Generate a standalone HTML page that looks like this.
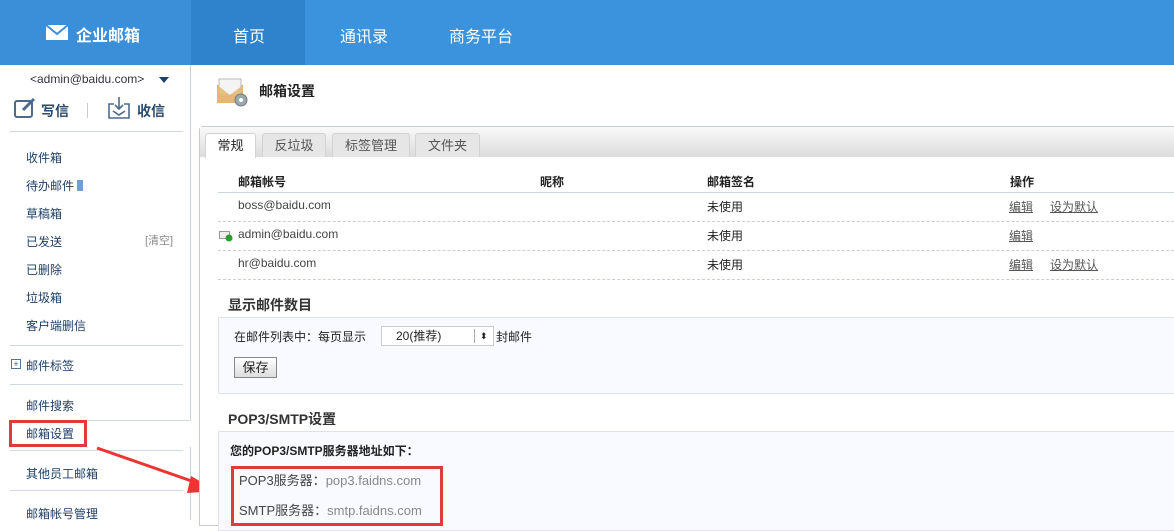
<!DOCTYPE html><html><head><meta charset="utf-8"><style>
*{margin:0;padding:0;box-sizing:border-box}
body{width:1174px;height:520px;overflow:hidden;background:#fff;font-family:"Liberation Sans","Noto Sans CJK SC",sans-serif;font-size:12px;color:#333;position:relative}
.a{position:absolute;white-space:nowrap}
.hdr{left:0;top:0;width:1174px;height:65px;background:#3a93dc}
.nav{color:#fff;font-size:16px;top:23px}
.side a{position:absolute;left:26px;color:#1f3f66;font-size:12px}
.sep{position:absolute;left:10px;width:173px;height:1px;background:#cfd8e3}
.th{font-weight:bold;color:#222;top:173px}
.dash{position:absolute;left:218px;width:956px;border-top:1px dashed #c9d0d8}
.u{text-decoration:underline;color:#555}
.tab{position:absolute;top:133px;height:24px;background:#e6e6e6;border:1px solid #d3d3d3;border-bottom:none;color:#555;font-size:13px;text-align:center;line-height:23px;border-radius:3px 3px 0 0}
</style></head><body>
<div class="a hdr"></div>
<div class="a" style="left:0;top:0;width:191px;height:65px;background:#3b8fd8"></div>
<div class="a" style="left:191px;top:0;width:114px;height:65px;background:#2f82cc"></div>
<svg class="a" style="left:46px;top:25px" width="22" height="15"><rect width="22" height="15" fill="#fff"/><path d="M0 0 L11 9 L22 0" stroke="#3b8fd8" stroke-width="2" fill="none"/></svg>
<div class="a" style="left:76px;top:22px;color:#fff;font-size:16px;font-weight:bold">企业邮箱</div>
<div class="a nav" style="left:233px">首页</div>
<div class="a nav" style="left:340px">通讯录</div>
<div class="a nav" style="left:449px">商务平台</div>
<!-- sidebar -->
<div class="a" style="left:190px;top:65px;width:1px;height:355px;background:#c8d0da"></div>
<div class="a" style="left:190px;top:447px;width:1px;height:73px;background:#c8d0da"></div>
<div class="a" style="left:30px;top:72px;color:#334;font-size:12px">&lt;admin@baidu.com&gt;</div>
<svg class="a" style="left:159px;top:77px" width="10" height="6"><path d="M0 0H10L5 6Z" fill="#1f3f66"/></svg>
<svg class="a" style="left:14px;top:97px" width="24" height="22"><rect x="1" y="4" width="17" height="16" rx="2" fill="none" stroke="#4c6a8a" stroke-width="2"/><path d="M9 13 L20 2" stroke="#4c6a8a" stroke-width="3"/></svg>
<div class="a" style="left:41px;top:101px;font-size:14px;font-weight:bold;color:#2b4a6b">写信</div>
<div class="a" style="left:87px;top:103px;width:1px;height:15px;background:#ccc"></div>
<svg class="a" style="left:107px;top:96px" width="24" height="24"><path d="M7 8H2V22H22V8H17" fill="none" stroke="#4c6a8a" stroke-width="1.6"/><path d="M12 1V13M8 9L12 13L16 9M6 15L12 19L18 15" fill="none" stroke="#4c6a8a" stroke-width="1.6"/></svg>
<div class="a" style="left:137px;top:101px;font-size:14px;font-weight:bold;color:#2b4a6b">收信</div>
<div class="sep" style="top:131px"></div>
<div class="side">
<a style="top:149px">收件箱</a>
<a style="top:177px">待办邮件 <span style="display:inline-block;width:6px;height:11px;background:#6f9fd6;vertical-align:-1px"></span></a>
<a style="top:205px">草稿箱</a>
<a style="top:233px">已发送</a>
<a style="top:261px">已删除</a>
<a style="top:289px">垃圾箱</a>
<a style="top:317px">客户端删信</a>
<a style="top:357px">邮件标签</a>
<a style="top:397px">邮件搜索</a>
<a style="top:425px">邮箱设置</a>
<a style="top:465px">其他员工邮箱</a>
<a style="top:505px">邮箱帐号管理</a>
</div>
<div class="a" style="left:145px;top:232px;color:#888;font-size:11px">[清空]</div>
<div class="a" style="left:11px;top:359px;width:10px;height:10px;border:1px solid #5a7391;font-size:9px;line-height:8px;text-align:center;color:#3a5573">+</div>
<div class="sep" style="top:345px"></div>
<div class="sep" style="top:384px"></div>
<div class="a" style="left:10px;top:420px;width:181px;height:1px;background:#cfd8e3"></div>
<div class="sep" style="top:450px"></div>
<div class="sep" style="top:490px"></div>
<div class="a" style="left:9px;top:420px;width:78px;height:27px;border:3px solid #e03a3a"></div>
<svg class="a" style="left:95px;top:445px" width="130" height="50"><path d="M2 3 L108 40" stroke="#e33" stroke-width="3"/><path d="M96 31 L122 46 L92 48Z" fill="#e33"/></svg>
<!-- content -->
<svg class="a" style="left:215px;top:75px" width="34" height="32"><path d="M2 10H28V28H2Z" fill="#d9a867"/><path d="M4 4H26V20H4Z" fill="#f4f4f4" stroke="#bbb"/><path d="M2 10L15 20L28 10V28H2Z" fill="#e6b877" opacity=".9"/><circle cx="26" cy="25" r="6" fill="#9aa" stroke="#778"/><circle cx="26" cy="25" r="2" fill="#fff"/></svg>
<div class="a" style="left:259px;top:81px;font-size:14px;font-weight:bold;color:#222">邮箱设置</div>
<div class="a" style="left:199px;top:126px;width:975px;height:400px;border:1px solid #c5ccd4;border-right:none;border-radius:4px 0 0 0;background:#fff"></div>
<div class="a" style="left:200px;top:127px;width:974px;height:30px;background:linear-gradient(#fafafa,#dcdcdc)"></div>
<div class="tab" style="left:205px;width:51px;background:#fff;color:#222;height:25px">常规</div>
<div class="tab" style="left:262px;width:64px">反垃圾</div>
<div class="tab" style="left:332px;width:78px">标签管理</div>
<div class="tab" style="left:415px;width:65px">文件夹</div>
<div class="a th" style="left:238px">邮箱帐号</div>
<div class="a th" style="left:540px">昵称</div>
<div class="a th" style="left:707px">邮箱签名</div>
<div class="a th" style="left:1010px">操作</div>
<div class="a" style="left:218px;top:192px;width:956px;height:1px;background:#cdd6e0"></div>
<div class="a" style="left:238px;top:198px;color:#444">boss@baidu.com</div>
<div class="a" style="left:238px;top:227px;color:#444">admin@baidu.com</div>
<div class="a" style="left:238px;top:256px;color:#444">hr@baidu.com</div>
<svg class="a" style="left:219px;top:230px" width="14" height="12"><rect x="0.5" y="1.5" width="10" height="7" fill="#eee" stroke="#999"/><circle cx="10" cy="8" r="3.5" fill="#2a9d2a"/></svg>
<div class="a" style="left:707px;top:198px;color:#222">未使用</div>
<div class="a" style="left:707px;top:227px;color:#222">未使用</div>
<div class="a" style="left:707px;top:256px;color:#222">未使用</div>
<div class="a u" style="left:1009px;top:198px">编辑</div><div class="a u" style="left:1050px;top:198px">设为默认</div>
<div class="a u" style="left:1009px;top:227px">编辑</div>
<div class="a u" style="left:1009px;top:256px">编辑</div><div class="a u" style="left:1050px;top:256px">设为默认</div>
<div class="dash" style="top:221px"></div><div class="dash" style="top:250px"></div><div class="dash" style="top:279px"></div>
<div class="a" style="left:228px;top:295px;font-size:14px;font-weight:bold;color:#333">显示邮件数目</div>
<div class="a" style="left:218px;top:317px;width:956px;height:77px;border:1px solid #dce3ec;border-right:none;background:#f8faff"></div>
<div class="a" style="left:234px;top:328px;color:#222">在邮件列表中：每页显示</div>
<div class="a" style="left:381px;top:326px;width:113px;height:20px;border:1px solid #ccc;background:#fff;padding-left:14px;line-height:18px;color:#222">20(推荐)<span style="position:absolute;left:92px;top:2px;width:1px;height:14px;background:#aaa"></span><span style="position:absolute;left:98px;top:0;font-size:9px">⬍</span></div>
<div class="a" style="left:496px;top:328px;color:#222">封邮件</div>
<div class="a" style="left:234px;top:357px;width:43px;height:21px;border:1px solid #888;background:linear-gradient(#fff,#ddd);text-align:center;line-height:19px;font-size:13px;color:#222">保存</div>
<div class="a" style="left:228px;top:409px;font-size:14px;font-weight:bold;color:#333">POP3/SMTP设置</div>
<div class="a" style="left:218px;top:431px;width:956px;height:100px;border:1px solid #dce3ec;border-right:none;background:#f8faff"></div>
<div class="a" style="left:230px;top:442px;font-weight:bold;color:#222">您的POP3/SMTP服务器地址如下：</div>
<div class="a" style="left:231px;top:466px;width:212px;height:60px;border:3px solid #e03a3a"></div>
<div class="a" style="left:239px;top:470px;color:#444;font-size:13px">POP3服务器：<span style="color:#888">pop3.faidns.com</span></div>
<div class="a" style="left:239px;top:500px;color:#444;font-size:13px">SMTP服务器：<span style="color:#888">smtp.faidns.com</span></div>
</body></html>
